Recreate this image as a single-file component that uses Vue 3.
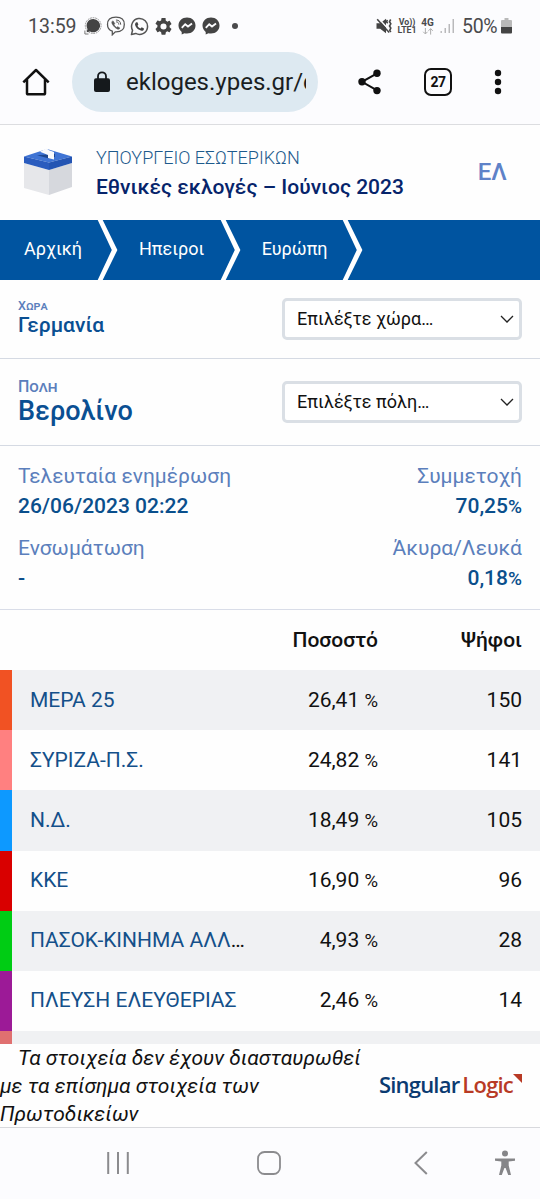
<template>
  <div class="screen">
    <!-- status bar -->
    <div class="status">
      <span class="clock">13:59</span>
      <svg class="st-signal" viewBox="0 0 18 18">
        <circle cx="9.200" cy="8.600" r="7.900" fill="none" stroke="#888" stroke-width=".9" stroke-dasharray="1.800 .8" />
        <path d="M9.200 1.900a6.700 6.700 0 1 1-3.200 12.500L2.600 15.200l.9-3.200A6.700 6.700 0 0 1 9.200 1.900z" fill="#444" />
        <path d="M.9 13.500V17H4.500" fill="none" stroke="#777" />
      </svg>
      <svg class="st-viber" viewBox="0 0 20 20" fill="none" stroke="#555" stroke-linecap="round">
        <path d="M10 1.200c6 0 8.300 2.100 8.300 7.300s-2.600 7.300-8.300 7.300h-.7L6.300 18.800v-3.600C3 14.100 1.500 12.200 1.500 8.500 1.500 3.300 4 1.200 10 1.200z" stroke-width="1.300" />
        <path d="M6.300 5.200c-.8.900-.6 2 .4 3.500 1.500 2.300 3.200 3.800 5.200 4.500.9.200 1.700-.4 2-1.100l-2.200-1.400-1 .8c-1.400-.7-2.200-1.700-2.700-2.900l.8-.8-1.300-2.300z" fill="#555" stroke-width=".6" />
        <path d="M10.300 4c2.800.1 4.300 1.600 4.400 4.300M10.500 5.900c1.500.1 2.200.8 2.300 2.300" stroke-width="1" />
      </svg>
      <svg class="st-whatsapp" viewBox="0 0 20 20">
        <path d="M1.500 18.500l1.200-4.500A8.400 8.400 0 1 1 6 17.300z" fill="none" stroke="#555" stroke-width="1.600" stroke-linejoin="round" />
        <path d="M6.800 5.500h1l1 2.400-.9 1.300c.7 1.400 1.700 2.300 3.200 3l1.200-1.400 2.400 1.200c.1 1.600-1 2.600-2.500 2.500-3.700-.6-6.400-3.500-6.900-6.500 0-1.100.6-2.200 1.500-2.500z" fill="#444" />
      </svg>
      <svg class="st-gear" viewBox="2 2 20 20" fill="#444">
        <path d="M19.140 12.940c.04-.3.06-.61.06-.94s-.02-.64-.07-.94l2.030-1.580a.49.490 0 0 0 .12-.61l-1.920-3.320a.49.490 0 0 0-.59-.22l-2.390.96a7 7 0 0 0-1.620-.94l-.36-2.540A.48.480 0 0 0 13.920 2h-3.840a.48.480 0 0 0-.48.410l-.36 2.540a7.300 7.300 0 0 0-1.620.94l-2.390-.96a.48.480 0 0 0-.59.220L2.720 8.470a.48.480 0 0 0 .12.610l2.030 1.580c-.05.3-.09.630-.09.940s.02.640.07.940l-2.010 1.980a.49.490 0 0 0-.12.610l1.920 3.320c.12.220.37.290.59.220l2.390-.96c.5.380 1.030.7 1.620.94l.36 2.540c.05.240.24.410.48.410h3.840c.24 0 .44-.17.470-.41l.36-2.540a7 7 0 0 0 1.620-.94l2.390.96c.22.080.47 0 .59-.22l1.920-3.320a.48.480 0 0 0-.12-.61zM12 15.600a3.600 3.600 0 1 1 0-7.200 3.600 3.600 0 0 1 0 7.200z" />
      </svg>
      <svg v-for="n in 2" :key="n" class="st-messenger" viewBox="0 0 18 18">
        <path d="M9 .6c4.900 0 8.500 3.400 8.500 8s-3.600 8-8.500 8c-.9 0-1.700-.1-2.500-.3L3.700 17.400v-2.500C1.700 13.400.5 11.200.5 8.600c0-4.600 3.600-8 8.500-8z" fill="#444" />
        <path d="M3.800 10.900l3.400-3.700 2.800 2.300 4-2.900" fill="none" stroke="#fcfcfe" stroke-width="1.900" />
      </svg>
      <span class="st-dot"></span>

      <div class="status-right">
        <svg class="st-mute" viewBox="0 0 16 16">
          <path d="M.5 5.200h3.700L10 .8v14.400l-5.800-4.400H.5z" fill="#444" />
          <path d="M2.800.8l12 13" stroke="#fcfcfe" stroke-width="1.600" />
          <path d="M1.200 1.300l12 13.200" stroke="#444" stroke-width="1.500" />
          <path d="M11.500 2l-1.100 1.700 1.300 1.600M14.700 1.500l-1.200 2.200 1.300 2.100-1.300 2.200 1.300 2.100-1 2.200 1 1.700" fill="none" stroke="#444" stroke-width="1.600" />
        </svg>
        <div class="volte"><span>Vo))</span><span>LTE1</span></div>
        <div class="net">
          <span>4G</span>
          <svg viewBox="0 0 12 8" fill="none" stroke="#aaa" stroke-width="1.100">
            <path d="M3 0v6.600M.5 4.300L3 6.800l2.500-2.500M9 7.500V.9M6.500 3.200L9 .7l2.500 2.500" />
          </svg>
        </div>
        <svg class="st-bars" viewBox="0 0 15 16" fill="#b9b9bb">
          <path d="M.5 13h1.400v2H.5zM4.500 10H6v5H4.500zM8.500 6H10v9H8.500zM12.500 1H14v14h-1.500z" />
        </svg>
        <span class="battery-text">50%</span>
        <svg class="st-battery" viewBox="0 0 11 16">
          <path d="M3.500 0h4v2H10a1 1 0 0 1 1 1v6H0V3a1 1 0 0 1 1-1h2.500z" fill="#b9b9b9" />
          <path d="M0 9h11v5.500a1 1 0 0 1-1 1H1a1 1 0 0 1-1-1z" fill="#444" />
        </svg>
      </div>
    </div>

    <!-- browser toolbar -->
    <div class="toolbar">
      <svg class="tb-home" viewBox="0 0 28 28" fill="none" stroke="#111" stroke-width="2.500" stroke-linejoin="round">
        <path d="M1.300 14.300L14 2l12.700 12.300M5 11.500V25.500a.8.800 0 0 0 .8.800h16.400a.8.800 0 0 0 .8-.8V11.500" />
      </svg>
      <div class="address">
        <svg viewBox="0 0 16 21">
          <path d="M4 8V5.300a4 4 0 0 1 8 0V8" fill="none" stroke="#15191c" stroke-width="1.800" />
          <rect x="0" y="7.200" width="16" height="13.800" rx="2" fill="#15191c" />
        </svg>
        <span class="url">ekloges.ypes.gr/c</span>
      </div>
      <svg class="tb-share" viewBox="0 0 24 26">
        <path d="M19.500 4.200L4 12.800l15.500 8.800" fill="none" stroke="#111" stroke-width="2" />
        <circle cx="19" cy="4.200" r="3.700" fill="#111" />
        <circle cx="4" cy="12.800" r="3.700" fill="#111" />
        <circle cx="19" cy="21.600" r="3.700" fill="#111" />
      </svg>
      <div class="tabs">27</div>
      <svg class="tb-more" viewBox="0 0 8 26" fill="#111">
        <circle cx="4" cy="4" r="3.200" /><circle cx="4" cy="13" r="3.200" /><circle cx="4" cy="22" r="3.200" />
      </svg>
    </div>

    <!-- site header -->
    <header class="header">
      <svg class="logo" viewBox="0 0 50 48">
        <path d="M1 15l25 7v25L1 40z" fill="#e6e7ea" />
        <path d="M26 22l23-7v24L26 47z" fill="#d6d8dd" />
        <path d="M1 8.500L24 1l25 7.500L26 14.500z" fill="#3f74d4" />
        <path d="M1 8.500l25 6V22L1 15z" fill="#2a5cbe" />
        <path d="M26 14.500l23-6V15l-23 7z" fill="#2455b3" />
        <path d="M14 7.300l11 3 7-1.300V6z" fill="#1d468f" />
        <path d="M17 3.800L23.500.2l2.500 2 5 1.800v7.500l-6-1.600V7z" fill="#f9fafc" />
      </svg>
      <div class="titles">
        <div class="ministry">ΥΠΟΥΡΓΕΙΟ ΕΣΩΤΕΡΙΚΩΝ</div>
        <div class="title">Εθνικές εκλογές – Ιούνιος 2023</div>
      </div>
      <div class="lang">ΕΛ</div>
    </header>

    <nav class="crumbs">
      <div v-for="item in crumbs" :key="item" class="crumb">
        <span>{{ item }}</span>
        <svg viewBox="0 0 21 60"><path d="M.7 0h5L20.400 30 5.700 60h-5L14.800 30z" fill="#fff" /></svg>
      </div>
    </nav>

    <section class="place country">
      <div>
        <div class="place-label">Χωρα</div>
        <div class="place-name">Γερμανία</div>
      </div>
      <div class="select">
        <span>Επιλέξτε χώρα…</span>
        <svg viewBox="0 0 14 8"><path d="M1 1l6 6 6-6" fill="none" stroke="#222" stroke-width="1.300" /></svg>
      </div>
    </section>

    <section class="place city">
      <div>
        <div class="place-label">Πολη</div>
        <div class="place-name">Βερολίνο</div>
      </div>
      <div class="select">
        <span>Επιλέξτε πόλη…</span>
        <svg viewBox="0 0 14 8"><path d="M1 1l6 6 6-6" fill="none" stroke="#222" stroke-width="1.300" /></svg>
      </div>
    </section>

    <section class="info">
      <div v-for="item in info" :key="item.label" class="info-item">
        <div class="info-label">{{ item.label }}</div>
        <div class="info-value">{{ item.value }}<small v-if="item.percent">%</small></div>
      </div>
    </section>

    <!-- results -->
    <div class="results">
      <div class="row head">
        <div class="name"></div>
        <div class="share">Ποσοστό</div>
        <div class="votes">Ψήφοι</div>
      </div>
      <div v-for="party in parties" :key="party.name" class="row" :style="{ borderLeftColor: party.color }">
        <div class="name"><a>{{ party.name }}</a><i v-if="party.cut">…</i></div>
        <div class="share">{{ party.share }} <small>%</small></div>
        <div class="votes">{{ party.votes }}</div>
      </div>
      <div class="row next"></div>
    </div>

    <footer class="footer">
      <p>Τα στοιχεία δεν έχουν διασταυρωθεί<br />με τα επίσημα στοιχεία των<br />Πρωτοδικείων</p>
      <div class="brand">
        <span class="singular">Singular</span><span class="logic">Logic</span>
        <svg viewBox="0 0 8 8"><path d="M0 0h8v8z" fill="#b83a25" /></svg>
      </div>
    </footer>

    <!-- system navigation -->
    <div class="sysnav">
      <svg class="nav-recent" viewBox="0 0 22 24"><path d="M1.200 1v22M11 1v22M20.800 1v22" stroke="#8b8b8e" stroke-width="2" /></svg>
      <svg class="nav-home" viewBox="0 0 24 24"><rect x="1" y="1" width="22" height="22" rx="6.500" fill="none" stroke="#8b8b8e" stroke-width="1.800" /></svg>
      <svg class="nav-back" viewBox="0 0 14 24"><path d="M12.800 1L1.500 12l11.300 11" fill="none" stroke="#8b8b8e" stroke-width="2" /></svg>
      <svg class="nav-access" viewBox="0 0 20 26" fill="#858588">
        <circle cx="10" cy="3.400" r="3" />
        <path d="M0 8.400h20v2.300l-6.300.8v4L16 25h-2.800L10.600 18H9.400L6.800 25H4l2.300-9.500v-4L0 10.700z" />
      </svg>
    </div>
  </div>
</template>

<script setup>
import { ref } from 'vue';

// Διαδρομή πλοήγησης
const crumbs = ref(['Αρχική', 'Ηπειροι', 'Ευρώπη']);

const info = ref([
  { label: 'Τελευταία ενημέρωση', value: '26/06/2023 02:22' },
  { label: 'Συμμετοχή', value: '70,25', percent: true },
  { label: 'Ενσωμάτωση', value: '-' },
  { label: 'Άκυρα/Λευκά', value: '0,18', percent: true },
]);

// Αποτελέσματα ανά κόμμα
const parties = ref([
  { name: 'ΜΕΡΑ 25', share: '26,41', votes: 150, color: '#f15223' },
  { name: 'ΣΥΡΙΖΑ-Π.Σ.', share: '24,82', votes: 141, color: '#ff8080' },
  { name: 'Ν.Δ.', share: '18,49', votes: 105, color: '#0d99ff' },
  { name: 'ΚΚΕ', share: '16,90', votes: 96, color: '#d90000' },
  { name: 'ΠΑΣΟΚ-ΚΙΝΗΜΑ ΑΛΛ', share: '4,93', votes: 28, color: '#00cc14', cut: true },
  { name: 'ΠΛΕΥΣΗ ΕΛΕΥΘΕΡΙΑΣ', share: '2,46', votes: 14, color: '#9c1a97' },
]);
</script>

<style>
body {
  margin: 0;
  background: #fefefe;
}
</style>

<style scoped>
.screen {
  width: 540px;
  height: 1199px;
  overflow: hidden;
  display: flex;
  flex-direction: column;
  font-family: Roboto, "Noto Sans", sans-serif;
  font-size: 21px;
  color: #111;
  background: #fefefe;
}

.screen > * {
  flex-shrink: 0;
  box-sizing: border-box;
}

svg {
  display: block;
  flex-shrink: 0;
}

/* status bar */
.status {
  height: 52px;
  padding: 0 28px;
  display: flex;
  align-items: center;
  background: #fcfcfe;
  color: #4a4a4c;
}

.clock {
  width: 56px;
  font-size: 19.500px;
}

.st-signal {
  width: 18px;
  height: 18px;
  margin-right: 4px;
}

.st-viber {
  width: 20px;
  height: 20px;
  margin-right: 4px;
}

.st-whatsapp {
  width: 19px;
  height: 19px;
  margin-right: 6px;
}

.st-gear {
  width: 17px;
  height: 17px;
  margin-right: 6px;
}

.st-messenger {
  width: 18px;
  height: 18px;
  margin-right: 5.500px;
}

.st-dot {
  width: 6px;
  height: 6px;
  margin-left: 7px;
  border-radius: 50%;
  background: #4a4a4c;
}

.status-right {
  margin-left: auto;
  display: flex;
  align-items: center;
}

.st-mute {
  width: 16px;
  height: 16px;
  margin-right: 5px;
}

.volte {
  display: flex;
  flex-direction: column;
  align-items: center;
  width: 20px;
  margin-right: 4px;
  font-size: 8.800px;
  line-height: 8.500px;
  font-weight: 700;
}

.net {
  display: flex;
  flex-direction: column;
  align-items: center;
  width: 13px;
  margin-right: 6px;
  font-size: 10px;
  line-height: 10px;
  font-weight: 700;
}

.net svg {
  width: 12px;
  height: 7px;
}

.st-bars {
  width: 15px;
  height: 16px;
  margin-right: 7px;
}

.battery-text {
  width: 39px;
  font-size: 19.500px;
  letter-spacing: -0.300px;
}

.st-battery {
  width: 11px;
  height: 16px;
}

/* browser toolbar */
.toolbar {
  height: 73px;
  padding: 0 22px 13px;
  display: flex;
  align-items: center;
  background: #fcfcfe;
  border-bottom: 1px solid #dcdde0;
}

.tb-home {
  width: 28px;
  height: 28px;
  margin-right: 22px;
}

.address {
  box-sizing: border-box;
  width: 246px;
  height: 60px;
  padding: 0 12px 0 22px;
  display: flex;
  align-items: center;
  border-radius: 30px;
  background: #dde9f1;
}

.address svg {
  width: 16px;
  height: 21px;
  margin-right: 16px;
}

.url {
  overflow: hidden;
  width: 180px;
  padding-top: 1px;
  white-space: nowrap;
  font-size: 24px;
  color: #1a1e22;
}

.tb-share {
  width: 24px;
  height: 26px;
  margin-left: 40px;
}

.tabs {
  box-sizing: border-box;
  width: 28px;
  height: 28px;
  margin-left: 42px;
  border: 2.500px solid #111;
  border-radius: 7px;
  font-size: 14px;
  font-weight: 700;
  letter-spacing: -0.500px;
  line-height: 24px;
  text-align: center;
}

.tb-more {
  width: 8px;
  height: 26px;
  margin-left: 42px;
}

/* site header */
.header {
  height: 94.500px;
  padding: 0 33px 0 23px;
  display: flex;
  align-items: center;
}

.logo {
  width: 50px;
  height: 48px;
  margin-right: 23px;
}

.ministry {
  padding-top: 2px;
  font-size: 18px;
  line-height: 28px;
  font-weight: 300;
  color: #1d5a8c;
}

.title {
  font-size: 21px;
  line-height: 30px;
  font-weight: 500;
  color: #06246b;
  white-space: nowrap;
}

.lang {
  margin-left: auto;
  padding-bottom: 1px;
  font-size: 24px;
  font-weight: 500;
  color: #5e82c8;
}

.crumbs {
  height: 60px;
  margin-bottom: 0.500px;
  display: flex;
  background: #0054a0;
  color: #fff;
  font-size: 18px;
}

.crumb {
  display: flex;
  align-items: center;
  justify-content: space-between;
  box-sizing: border-box;
  width: 122.700px;
  padding-left: 21px;
}

.crumb:first-child {
  width: 118px;
  padding-left: 24px;
}

.crumb span {
  padding-bottom: 2px;
}

.crumb svg {
  width: 21px;
  height: 60px;
}

/* country and city */
.place {
  padding: 0 18px;
  display: flex;
  align-items: center;
  justify-content: space-between;
  border-bottom: 1.500px solid #d5dae3;
}

.country {
  height: 79px;
}

.city {
  height: 87px;
}

.place-label {
  font-variant: small-caps;
  font-weight: 500;
  color: #5b7fbc;
}

.place-name {
  font-weight: 500;
  color: #0a4f92;
}

.country > div:first-child {
  padding-bottom: 1px;
}

.country .place-label {
  font-size: 12.500px;
  line-height: 14px;
}

.country .place-name {
  font-size: 21px;
  line-height: 25px;
}

.city .place-label {
  font-size: 16px;
  line-height: 19px;
}

.city .place-name {
  font-size: 27px;
  line-height: 31px;
}

.select {
  box-sizing: border-box;
  width: 240px;
  height: 42px;
  padding: 0 5px 1px 12px;
  display: flex;
  align-items: center;
  justify-content: space-between;
  border: 3px solid #dadfe5;
  border-radius: 5px;
  background: #fff;
  font-size: 18px;
}

.select svg {
  width: 14px;
  height: 8px;
}

/* summary figures */
.info {
  height: 164px;
  padding: 15px 18px 0;
  display: grid;
  grid-template-columns: 1fr 1fr;
  grid-auto-rows: 72px;
  border-bottom: 1.500px solid #d9dde8;
}

.info-item:nth-child(even) {
  text-align: right;
}

.info-label {
  line-height: 30px;
  color: #5b7fbc;
}

.info-value {
  line-height: 30px;
  font-weight: 500;
  color: #0a4f8c;
}

.info-value small {
  font-size: 19px;
}

/* results table */
.results {
  height: 434px;
  overflow: hidden;
}

.row {
  box-sizing: border-box;
  height: 60.150px;
  padding: 0 18px 1.500px;
  display: flex;
  align-items: center;
  border-left: 12px solid transparent;
}

.row:nth-child(even) {
  background: #f0f1f3;
}

.row.head {
  height: 60.200px;
  padding-bottom: 1px;
  font-weight: 500;
}

.row.next {
  border-left-color: #e07070;
}

.name {
  width: 218px;
  white-space: nowrap;
}

.name a {
  color: #14508a;
}

.name i {
  font-style: normal;
}

.share {
  width: 130px;
  text-align: right;
}

.share small {
  font-size: 18.500px;
}

.votes {
  flex: 1;
  text-align: right;
}

/* note and vendor */
.footer {
  height: 84px;
  padding-right: 18px;
  display: flex;
  align-items: center;
  justify-content: space-between;
  border-bottom: 1.500px solid #d8d9dd;
}

.footer p {
  margin: 0;
  font-style: italic;
  line-height: 28px;
  text-indent: 18px;
  white-space: nowrap;
}

.brand {
  display: flex;
  align-items: center;
  padding-bottom: 3px;
  font-family: "Open Sans", "Noto Sans", sans-serif;
  font-size: 22px;
  font-weight: 600;
  letter-spacing: -0.800px;
}

.singular {
  color: #0b3a70;
}

.logic {
  margin-left: 3px;
  color: #b83a25;
}

.brand svg {
  width: 9px;
  height: 9px;
  margin-bottom: 12px;
}

/* system navigation */
.sysnav {
  height: 72px;
  padding: 0 25px 2px 107px;
  display: flex;
  align-items: center;
  background: #fcfcfe;
}

.nav-recent {
  width: 22px;
  height: 24px;
}

.nav-home {
  width: 24px;
  height: 24px;
  margin-left: 128px;
}

.nav-back {
  width: 14px;
  height: 24px;
  margin-left: 133px;
}

.nav-access {
  width: 20px;
  height: 26px;
  margin-left: auto;
}
</style>
